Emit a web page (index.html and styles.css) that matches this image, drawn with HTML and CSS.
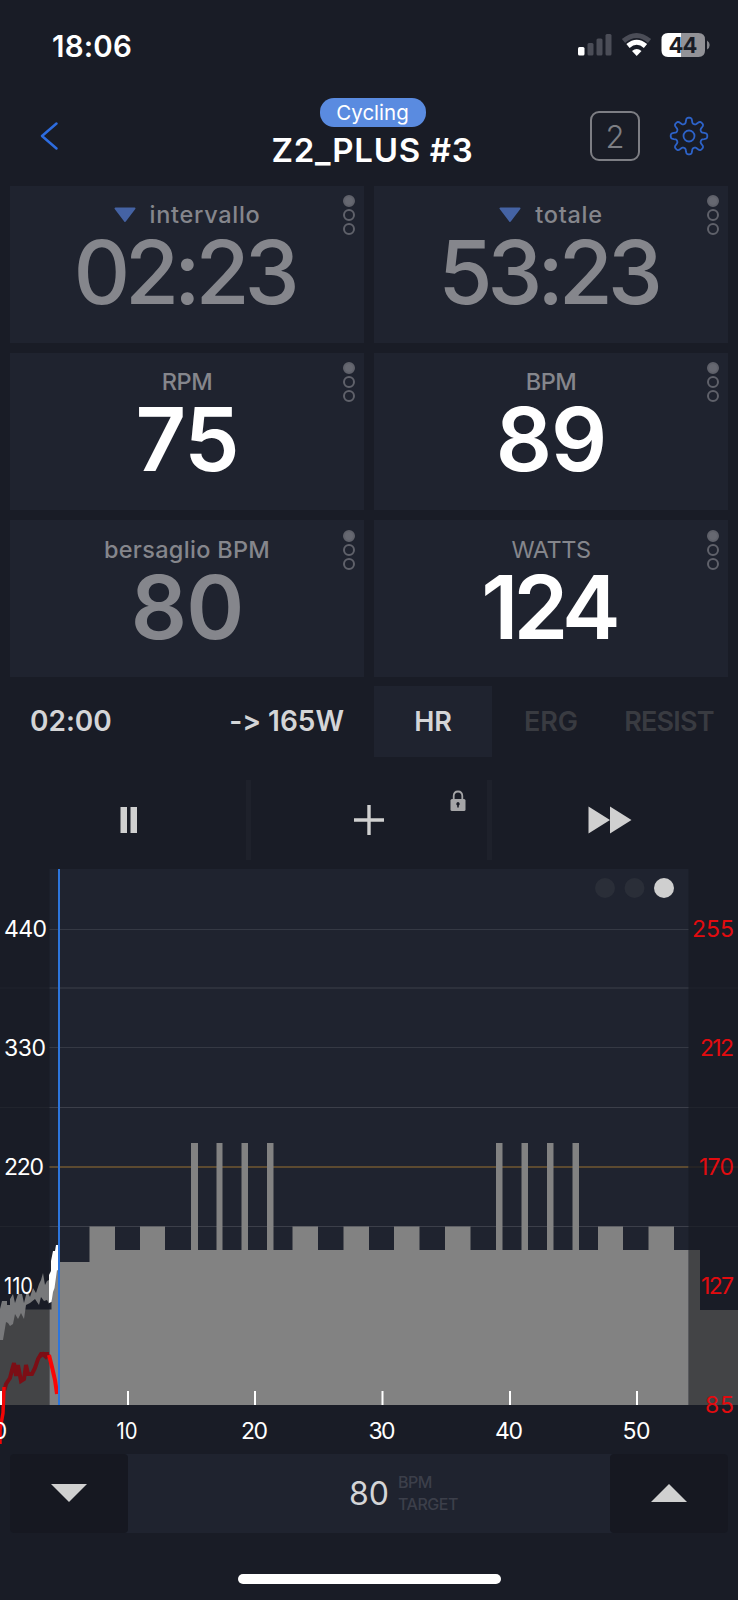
FILE: index.html
```html
<!DOCTYPE html>
<html lang="it">
<head>
    <meta charset="utf-8">
    <title>Z2_PLUS #3</title>
    <link rel="stylesheet" href="styles.css">
</head>
<body>
    <div class="status-bar">
        <span class="clock">18:06</span>
        <svg class="status-icons" width="134" height="26" viewBox="0 0 134 26">
            <rect x="1" y="15" width="6.5" height="8.5" rx="1.5" fill="#fff"/>
            <g fill="#4b4d57">
                <rect x="10.5" y="11" width="6" height="12.5" rx="1.5"/>
                <rect x="19.5" y="6.5" width="6" height="17" rx="1.5"/>
                <rect x="28.5" y="2" width="6" height="21.5" rx="1.5"/>
            </g>
            <path d="M46.500 9Q59.500 -2 72.500 9" fill="none" stroke="#4b4d57" stroke-width="5"/>
            <path d="M51 14Q59.700 6.500 68.500 14" fill="none" stroke="#fff" stroke-width="5"/>
            <path d="M55 19Q59.700 15 64.500 19L59.700 24Z" fill="#fff"/>
            <path d="M91 1H104V25H91Q84.500 25 84.500 18.500V7.500Q84.500 1 91 1Z" fill="#fff"/>
            <path d="M104 1H121.500Q128 1 128 7.500V18.500Q128 25 121.500 25H104Z" fill="#929297"/>
            <path d="M130 8.500Q132.700 10 132.700 13Q132.700 16 130 17.500Z" fill="#84858b"/>
            <text x="91.5" y="21" class="battery-level" textLength="29">44</text>
        </svg>
    </div>

    <div class="header">
        <svg class="back" width="22" height="32" viewBox="0 0 22 32">
            <path d="M18.500 3.500L4 16L18.500 28.500" fill="none" stroke="#2d6cdf" stroke-width="2.500" stroke-linecap="round" stroke-linejoin="round"/>
        </svg>
        <div class="title">
            <span class="sport">Cycling</span>
            <h1>Z2_PLUS #3</h1>
        </div>
        <div class="header-actions">
            <span class="lap-count">2</span>
            <svg width="40" height="40" viewBox="-20 -20 40 40" fill="none" stroke="#2d62c8" stroke-width="1.8" stroke-linejoin="round">
                <circle r="5.5"/>
                <path id="gear"/>
            </svg>
        </div>
    </div>

    <div class="metrics">
        <div class="metric">
            <div class="label wide"><svg width="22" height="16" viewBox="0 0 22 16"><path d="M1.500 1.500H20.500L11 14Z"/></svg>intervallo</div>
            <div class="value time">02:23</div>
            <div class="pager"><i class="on"></i><i></i><i></i></div>
        </div>
        <div class="metric">
            <div class="label wide"><svg width="22" height="16" viewBox="0 0 22 16"><path d="M1.500 1.500H20.500L11 14Z"/></svg>totale</div>
            <div class="value time">53:23</div>
            <div class="pager"><i class="on"></i><i></i><i></i></div>
        </div>
        <div class="metric">
            <div class="label caps">RPM</div>
            <div class="value">75</div>
            <div class="pager"><i class="on"></i><i></i><i></i></div>
        </div>
        <div class="metric">
            <div class="label caps">BPM</div>
            <div class="value">89</div>
            <div class="pager"><i class="on"></i><i></i><i></i></div>
        </div>
        <div class="metric">
            <div class="label target-name">bersaglio BPM</div>
            <div class="value dim">80</div>
            <div class="pager"><i class="on"></i><i></i><i></i></div>
        </div>
        <div class="metric">
            <div class="label caps light">WATTS</div>
            <div class="value watts">124</div>
            <div class="pager"><i class="on"></i><i></i><i></i></div>
        </div>
    </div>

    <div class="mode-row">
        <div class="next-step"><span class="step-time">02:00</span><span>-&gt; 165W</span></div>
        <div class="modes">
            <span class="mode active">HR</span>
            <span class="mode">ERG</span>
            <span class="mode resist">RESIST</span>
        </div>
    </div>

    <div class="controls">
        <div class="control pause">
            <svg width="18" height="28" viewBox="0 0 18 28"><path d="M.5 1H7V27H.5ZM10.500 1H17V27H10.500Z"/></svg>
        </div>
        <div class="control">
            <svg width="30" height="30" viewBox="0 0 30 30"><path d="M13.300 0H16.700V13.300H30V16.700H16.700V30H13.300V16.700H0V13.300H13.300Z"/></svg>
            <svg class="lock" width="16" height="22" viewBox="0 0 16 22">
                <path d="M3.700 10V6Q3.700 1.500 8 1.500Q12.300 1.500 12.300 6V10" fill="none" stroke="#a5a5a7" stroke-width="1.800"/>
                <rect x=".5" y="9" width="15" height="12" rx="1.5" fill="#a5a5a7"/>
                <path d="M8 12A1.900 1.900 0 0 1 8.800 15.500V17.500H7.200V15.500A1.900 1.900 0 0 1 8 12Z" fill="#191c26"/>
            </svg>
        </div>
        <div class="control skip">
            <svg width="44" height="28" viewBox="0 0 44 28"><path d="M.5 .5L22 14L.5 27.500ZM22 .5L43.500 14L22 27.500Z"/></svg>
        </div>
    </div>

    <svg class="chart" width="738" height="594" viewBox="0 860 738 594">
        <rect x="49.5" y="869" width="639" height="536" fill="#1f232f"/>

        <!-- grid -->
        <path d="M0 988H738M0 1107.500H738M0 1226.500H738" stroke="#fff" stroke-opacity=".035" fill="none"/>
        <path d="M49.500 929.500H688.500M49.500 988H688.500M49.500 1047.500H688.500M49.500 1107.500H688.500M49.500 1226.500H688.500" stroke="#fff" stroke-opacity=".1" fill="none"/>
        <path d="M49.500 1167H688.500" stroke="#5c4a30" stroke-width="2"/>
        <path d="M688.500 1167H738" stroke="#2a2626" stroke-width="1.500"/>

        <!-- workout profile -->
        <path d="M0 1405V1309.500H49.500V1405ZM688.500 1405V1250H700V1310H738V1405Z" fill="#434446"/>
        <path d="M49.500 1405V1309.500H51.500V1262H89.500V1226.500H115V1250H140V1226.500H165V1250H191V1143H198V1250H216.500V1143H222.500V1250H241.500V1143H248V1250H267V1143H273.500V1250H292.500V1226.500H318V1250H343.500V1226.500H369V1250H394V1226.500H419.500V1250H445V1226.500H470.500V1250H496V1143H502.500V1250H521.500V1143H528V1250H547V1143H553.500V1250H572.500V1143H579V1250H598V1226.500H623V1250H648.500V1226.500H674V1250H688.500V1405Z" fill="#828282"/>

        <!-- recorded power -->
        <path d="M0 1311V1309L2 1301H7V1305H10V1299L13 1294L15 1303L18 1294H22L24 1303L27 1291L30 1297L33 1288L36 1293L39 1284L41 1280L43 1273L45 1285L47 1281L49 1280V1304L47 1300L44 1301L41 1297L39 1305L35 1299L30 1303L26 1305L24 1319L21 1313L18 1319L15 1314L13 1324L10 1326L8 1323L6 1322L3 1340H0Z" fill="#78797b"/>
        <path d="M49 1275L51 1271V1261L53 1251H55L56 1245H59V1271L57 1270L54.500 1288L53 1292L51.500 1302L49 1303Z" fill="#fff"/>

        <!-- recorded heart rate -->
        <path d="M4.500 1390L6 1384L10 1378L12 1370L14 1363L16 1376L18 1365L21 1381L24 1379L26 1365L28 1374L32 1374L35 1368L38 1359L41 1354H49" fill="none" stroke="#7c0e15" stroke-width="4"/>
        <path d="M0 1444V1430L3 1413L4 1387" fill="none" stroke="#f30505" stroke-width="3.500"/>
        <path d="M40 1356L43 1354L46 1357L49 1354" fill="none" stroke="#7c0e15" stroke-width="4"/>
        <path d="M49 1355L52 1367L55 1380L57 1394" fill="none" stroke="#f90505" stroke-width="4"/>

        <path d="M59 869V1405" stroke="#2c75dc" stroke-width="2"/>
        <path d="M1 1391V1405M128 1391V1405M255 1391V1405M382.500 1391V1405M510 1391V1405M637 1391V1405" stroke="#fff" stroke-width="2"/>

        <g class="power-axis">
            <text x="4" y="937" textLength="43">440</text>
            <text x="4" y="1056" textLength="42">330</text>
            <text x="4" y="1175" textLength="40">220</text>
            <text x="4" y="1294" textLength="29" lengthAdjust="spacingAndGlyphs">110</text>
        </g>
        <g class="heart-axis">
            <text x="692" y="937" textLength="42">255</text>
            <text x="700" y="1056" textLength="34">212</text>
            <text x="699" y="1175" textLength="35">170</text>
            <text x="701" y="1294" textLength="33">127</text>
            <text x="705" y="1413" textLength="29">85</text>
        </g>
        <g class="time-axis">
            <text x="0" y="1439">0</text>
            <text x="127" y="1439" textLength="21" lengthAdjust="spacingAndGlyphs">10</text>
            <text x="254.5" y="1439" textLength="27">20</text>
            <text x="382" y="1439" textLength="27">30</text>
            <text x="509" y="1439" textLength="28">40</text>
            <text x="636.5" y="1439" textLength="28">50</text>
        </g>

        <circle cx="605" cy="888" r="10" fill="#2a2e38"/>
        <circle cx="634.5" cy="888" r="10" fill="#2a2e38"/>
        <circle cx="664" cy="888" r="10" fill="#cfcfcf"/>
    </svg>

    <div class="target-bar">
        <div class="step-button"><svg width="36" height="20" viewBox="0 0 36 20"><path d="M0 1H36L18 19Z"/></svg></div>
        <div class="target">
            <span class="target-value">80</span>
            <span class="target-label">BPM<br>TARGET</span>
        </div>
        <div class="step-button"><svg width="36" height="20" viewBox="0 0 36 20"><path d="M0 19H36L18 1Z"/></svg></div>
    </div>

    <div class="home-indicator"></div>

    <script>
        // Gear outline: eight rounded teeth
        var d = "";
        for (var i = 0; i <= 160; i++) {
            var a = i / 160 * Math.PI * 2;
            var r = 15.6 + 2.7 * Math.tanh(2 * Math.cos(8 * a)) / Math.tanh(2);
            d += (i ? "L" : "M") + (r * Math.cos(a)).toFixed(2) + " " + (r * Math.sin(a)).toFixed(2);
        }
        document.getElementById("gear").setAttribute("d", d + "Z");
    </script>
</body>
</html>
```
FILE: styles.css
```css
body {
    box-sizing: border-box;
    width: 738px;
    height: 1600px;
    margin: 0;
    overflow: hidden;
    background-color: #191c26;
    color: #d4d5d7;
    font-family: Inter, sans-serif;
    font-feature-settings: "calt" 0;
}

svg {
    display: block;
}

.status-bar {
    display: flex;
    justify-content: space-between;
    box-sizing: border-box;
    height: 90px;
    padding: 32px 27px 0 52px;
}

.clock {
    color: #fff;
    font-size: 29.5px;
    font-weight: 600;
    line-height: 28px;
    letter-spacing: 0.2px;
}

.battery-level {
    fill: #191c26;
    font-size: 22px;
    font-weight: 700;
}

.header {
    display: grid;
    grid-template-columns: 180px 385px 1fr;
    height: 95.5px;
}

.back {
    margin: 30px 0 0 38px;
}

.title {
    display: flex;
    flex-direction: column;
    align-items: center;
    padding-top: 8px;
}

.sport {
    width: 106px;
    height: 29px;
    border-radius: 14px;
    background-color: #5a8be0;
    color: #fff;
    font-size: 20.5px;
    line-height: 30px;
    text-align: center;
}

h1 {
    margin: 3px 0 0;
    color: #fff;
    font-size: 33px;
    font-weight: 600;
    line-height: 40px;
    letter-spacing: 0.7px;
    white-space: nowrap;
}

.header-actions {
    display: flex;
    gap: 29px;
    padding: 21px 0 0 25px;
}

.header-actions svg {
    margin-top: 5px;
}

.lap-count {
    box-sizing: border-box;
    width: 50px;
    height: 50px;
    border: 2px solid #7d7e84;
    border-radius: 9px;
    color: #7d7e84;
    font-size: 31px;
    font-weight: 300;
    line-height: 47px;
    text-align: center;
}

.metrics {
    display: grid;
    grid-template-columns: 354px 354px;
    grid-auto-rows: 157.3px;
    gap: 10px;
    padding: 0 10px;
}

.metric {
    position: relative;
    box-sizing: border-box;
    padding-top: 14.5px;
    background-color: #1f232f;
    text-align: center;
}

.label {
    display: flex;
    align-items: center;
    justify-content: center;
    height: 29px;
    color: #85868c;
    font-size: 23.5px;
    font-weight: 500;
    line-height: 29px;
}

.label svg {
    margin-right: 14px;
    fill: #4563a4;
    stroke: #4563a4;
    stroke-width: 2;
    stroke-linejoin: round;
}

.wide {
    letter-spacing: 0.7px;
}

.target-name {
    letter-spacing: 0.3px;
}

.caps {
    letter-spacing: -0.5px;
}

.light {
    font-weight: 400;
}

.value {
    color: #fff;
    font-size: 88px;
    font-weight: 600;
    line-height: 86px;
    letter-spacing: -1px;
}

.time {
    padding-right: 6px;
    color: #85868c;
    font-weight: 500;
    letter-spacing: -5.2px;
}

.watts {
    padding-right: 5px;
    letter-spacing: -5px;
}

.dim {
    color: #85868c;
}

/* page dots in the corner of a tile */
.pager {
    position: absolute;
    top: 9.5px;
    right: 9.5px;
    display: grid;
    gap: 2px;
}

.pager i {
    box-sizing: border-box;
    width: 12px;
    height: 12px;
    border: 2px solid #5f616a;
    border-radius: 50%;
}

.pager .on {
    background-color: #666871;
}

.mode-row {
    display: flex;
    height: 71px;
    margin-top: 8.6px;
    font-size: 28px;
    font-weight: 600;
    line-height: 71px;
}

.next-step {
    display: flex;
    justify-content: space-between;
    box-sizing: border-box;
    width: 374px;
    padding: 0 30px;
}

.modes {
    display: flex;
    color: #393b41;
    font-size: 27px;
}

.mode {
    width: 118px;
    text-align: center;
}

.active {
    background-color: #1f232f;
    color: #d4d5d7;
}

.resist {
    letter-spacing: -0.8px;
}

.controls {
    display: grid;
    grid-template-columns: 246px 241px 251px;
    height: 80px;
    margin-top: 23px;
}

.control {
    position: relative;
    display: flex;
    align-items: center;
    justify-content: center;
    fill: #d0d0d0;
}

.control + .control {
    border-left: 5px solid #1e212b;
}

.pause {
    padding-left: 11px;
}

.skip {
    padding-right: 11px;
}

.lock {
    position: absolute;
    top: 10px;
    right: 21px;
}

.power-axis,
.time-axis {
    fill: #fff;
    font-size: 23px;
}

.time-axis {
    text-anchor: middle;
}

.heart-axis {
    fill: #e30b0f;
    font-size: 23px;
}

.target-bar {
    display: grid;
    grid-template-columns: 118px 1fr 118px;
    height: 79px;
    margin: 0 10px;
    border-radius: 4px;
    background-color: #1f232f;
}

.step-button {
    display: flex;
    align-items: center;
    justify-content: center;
    border-radius: 4px;
    background-color: #161821;
    fill: #d0d0d0;
}

.target {
    display: flex;
    align-items: center;
    padding-left: 221px;
}

.target-value {
    width: 49px;
    font-size: 32px;
}

.target-label {
    color: #3c3f4a;
    font-size: 16px;
    font-weight: 500;
    line-height: 22px;
    letter-spacing: -0.5px;
}

.home-indicator {
    width: 263px;
    height: 10px;
    margin: 41px auto 0;
    border-radius: 5px;
    background-color: #fff;
}
```
